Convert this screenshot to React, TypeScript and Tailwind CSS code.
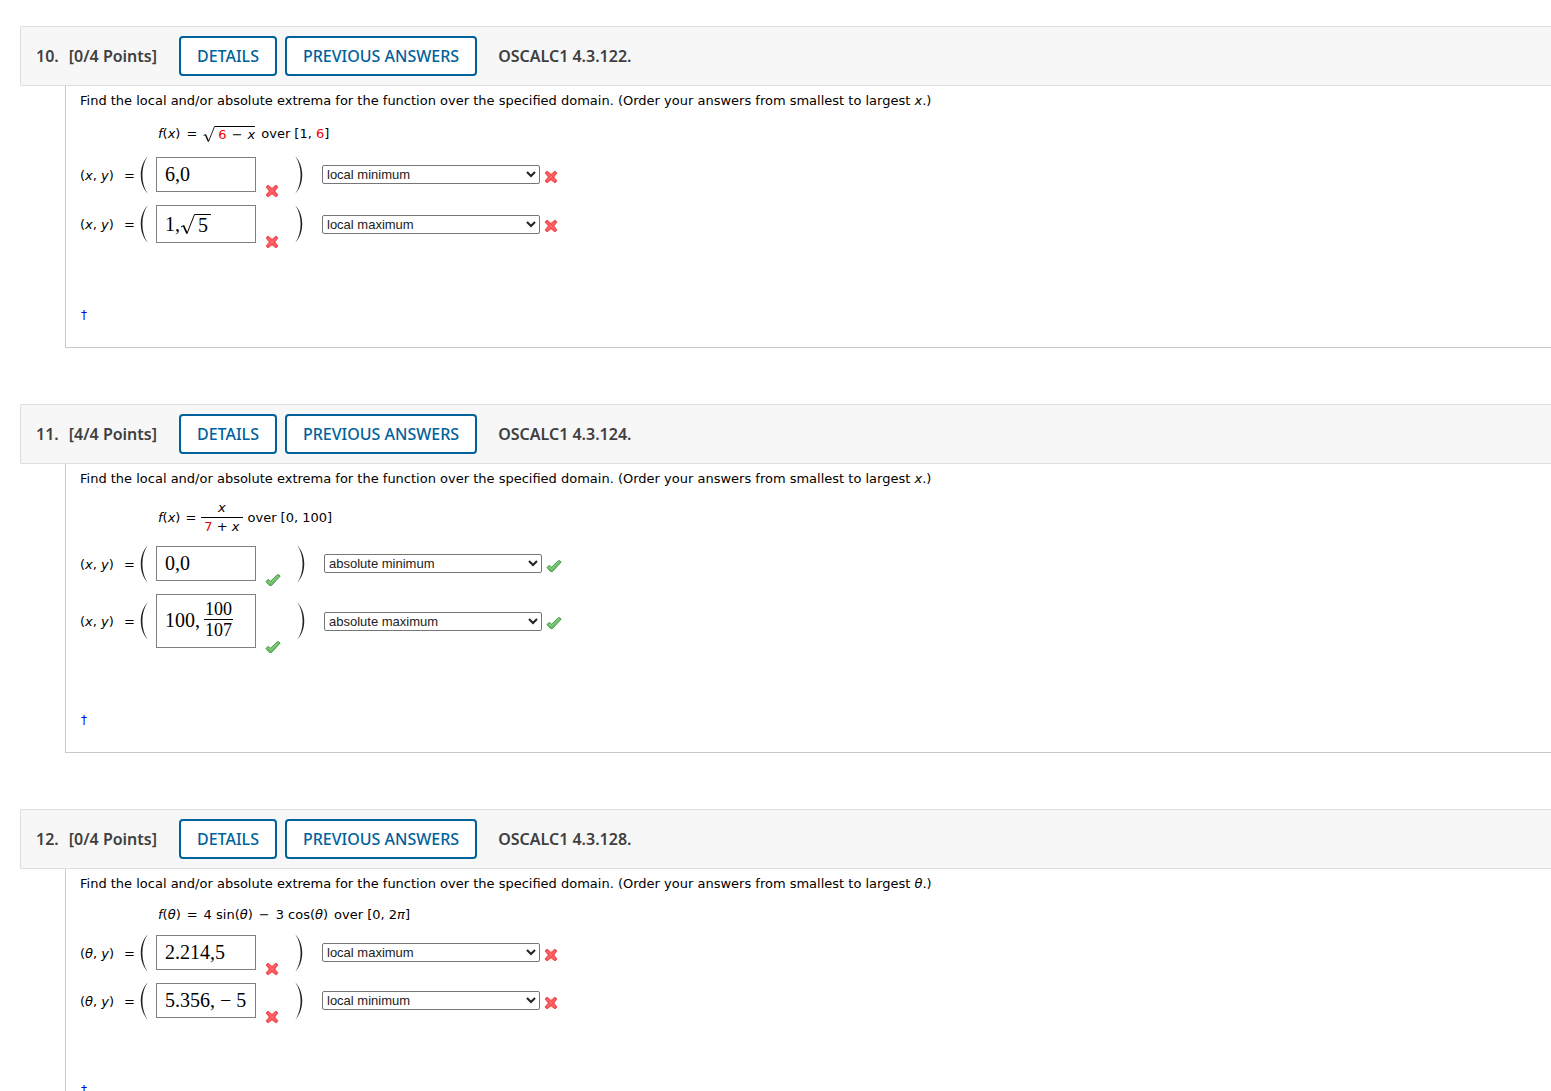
import React from 'react';

interface Answer {
  value: string;
  math?: React.ReactNode;
  kind: string;
}

interface Question {
  number: number;
  score: string;
  code: string;
  variable: string;
  correct: boolean;
  formula: React.ReactNode;
  answers: Answer[];
}

const KINDS = [
  'local minimum',
  'local maximum',
  'absolute minimum',
  'absolute maximum',
];

// Radical sign with a bar over its contents
const Root: React.FC<{ children: React.ReactNode }> = ({ children }) => (
  <span className="inline-flex items-end">
    <svg className="h-[17px] w-[12px]" viewBox="0 0 12 17" fill="none" stroke="#111">
      <path d="M0.5 9.5 L2.4 8.5" strokeWidth="0.9" />
      <path d="M2.4 8.5 L5.5 15.5" strokeWidth="1.5" />
      <path d="M5.5 15.5 L11.5 0.5 H12" strokeWidth="0.9" />
    </svg>
    <span className="flex h-[17px] gap-[5px] border-t border-black pl-[3px] leading-[15px]">{children}</span>
  </span>
);

const QUESTIONS: Question[] = [
  {
    number: 10,
    score: '0/4',
    code: 'OSCALC1 4.3.122.',
    variable: 'x',
    correct: false,
    formula: (
      <div className="flex h-6 items-center gap-1.5">
        <span><i>f</i>(<i>x</i>)</span>
        <span>=</span>
        <Root>
          <span className="text-[#ee0000]">6</span>
          <span>−</span>
          <i>x</i>
        </Root>
        <span>over [1, <span className="text-[#ee0000]">6</span>]</span>
      </div>
    ),
    answers: [
      { value: '6,0', kind: 'local minimum' },
      {
        value: '1,√5',
        math: (
          <div className="flex h-9 items-center">
            <span>1,</span>
            <svg className="h-[21px] w-[15px]" viewBox="0 0 15 21" fill="none" stroke="#000">
              <path d="M1 13 L3.5 11.5" strokeWidth="1" />
              <path d="M3.5 11.5 L7 19.5" strokeWidth="1.8" />
              <path d="M7 19.5 L14.5 0.5 H15" strokeWidth="1" />
            </svg>
            <span className="h-[21px] border-t border-black px-[3px] leading-[20px]">5</span>
          </div>
        ),
        kind: 'local maximum',
      },
    ],
  },
  {
    number: 11,
    score: '4/4',
    code: 'OSCALC1 4.3.124.',
    variable: 'x',
    correct: true,
    formula: (
      <div className="flex h-[35px] items-center gap-[5px]">
        <span><i>f</i>(<i>x</i>)</span>
        <span>=</span>
        <span className="flex flex-col items-center leading-[18px]">
          <i>x</i>
          <span className="border-t border-black px-[3px]">
            <span className="text-[#ee0000]">7</span> + <i>x</i>
          </span>
        </span>
        <span>over [0, 100]</span>
      </div>
    ),
    answers: [
      { value: '0,0', kind: 'absolute minimum' },
      {
        value: '100,100/107',
        math: (
          <div className="flex h-[52px] items-center gap-1 pb-[3px]">
            <span>100,</span>
            <span className="flex flex-col text-center text-[18px] leading-5">
              <span>100</span>
              <span className="border-t border-black px-px">107</span>
            </span>
          </div>
        ),
        kind: 'absolute maximum',
      },
    ],
  },
  {
    number: 12,
    score: '0/4',
    code: 'OSCALC1 4.3.128.',
    variable: 'θ',
    correct: false,
    formula: (
      <div className="flex h-[19px] gap-1.5 leading-5">
        <span><i>f</i>(<i>θ</i>)</span>
        <span>=</span>
        <span>4 sin(<i>θ</i>)</span>
        <span>−</span>
        <span>3 cos(<i>θ</i>)</span>
        <span>over [0, 2<i>π</i>]</span>
      </div>
    ),
    answers: [
      { value: '2.214,5', kind: 'local maximum' },
      { value: '5.356, − 5', kind: 'local minimum' },
    ],
  },
];

const Mark: React.FC<{ correct: boolean }> = ({ correct }) =>
  correct ? (
    <svg className="h-3.5 w-4" viewBox="0 0 16 14" role="img" aria-label="Correct">
      <path
        d="M1 8.6 L3 6.4 L5.6 8.2 L12.8 1.4 L15.2 3 L6.6 12.4 L4.4 12.4 Z"
        fill="#6cc067"
        stroke="#4a9a4a"
        strokeLinejoin="round"
      />
      <path d="M3 7.8 L5.6 9.8 L12.9 3" fill="none" stroke="#8fd488" />
    </svg>
  ) : (
    <svg className="size-3.5" viewBox="0 0 14 14" role="img" aria-label="Incorrect">
      <path
        d="M3 1 L7 4.4 L11 1 L13 3 L9.8 7 L13 11 L11 13 L7 9.8 L3 13 L1 11 L4.4 7 L1 3 Z"
        fill="#fb4d50"
        stroke="#f0565a"
        strokeLinejoin="round"
      />
      <path d="M3 3 L11 11 M11 3 L3 11" stroke="#ff7074" />
    </svg>
  );

const Paren: React.FC<{ side: 'left' | 'right' }> = ({ side }) => (
  <svg className="-my-0.5 h-[38px] w-2 shrink-0" viewBox="0 0 8 38" fill="#222">
    {side === 'left' ? (
      <path d="M7.8 0.3 C-1.6 10 -1.6 28 7.8 37.7 C0.6 28 0.6 10 7.8 0.3 Z" />
    ) : (
      <path d="M0.2 0.3 C9.6 10 9.6 28 0.2 37.7 C7.4 28 7.4 10 0.2 0.3 Z" />
    )}
  </svg>
);

const AnswerRow: React.FC<{ answer: Answer; variable: string; correct: boolean }> = ({
  answer,
  variable,
  correct,
}) => (
  <div className="flex items-center">
    <span className="flex w-[60px] justify-between pr-[5px] pt-0.5">
      <span>(<i>{variable}</i>, <i>y</i>)</span>
      <span>=</span>
    </span>
    <Paren side="left" />
    {answer.math ? (
      <div
        role="textbox"
        tabIndex={0}
        aria-label={`(${variable}, y): ${answer.value}`}
        className="ml-2 w-[100px] border border-[#808080] pl-2 font-['Liberation_Serif',serif] text-[20px]"
      >
        {answer.math}
      </div>
    ) : (
      <input
        type="text"
        aria-label={`(${variable}, y)`}
        defaultValue={answer.value}
        className="ml-2 h-[35px] w-[100px] border border-[#808080] pl-2 font-['Liberation_Serif',serif] text-[20px]"
      />
    )}
    <span className="-mb-1.5 ml-[9px] mr-4 self-end">
      <Mark correct={correct} />
    </span>
    <Paren side="right" />
    <select
      aria-label={`Type of extremum at (${variable}, y)`}
      defaultValue={answer.kind}
      className="ml-[19px] h-[19px] w-[218px] rounded-xs border border-[#767676] bg-white font-['Liberation_Sans',sans-serif] text-[13px] text-[#222]"
    >
      {KINDS.map(k => <option key={k} value={k}>{k}</option>)}
    </select>
    <span className="ml-1 mt-1">
      <Mark correct={correct} />
    </span>
  </div>
);

const QuestionCard: React.FC<{ question: Question }> = ({ question: q }) => (
  <section>
    <header className="flex h-[60px] items-center rounded-l-xs border border-r-0 border-[#dedede] bg-[#f7f7f7] pl-[15px] font-['Noto_Sans',sans-serif] text-[16px] font-semibold text-[#404040]">
      <h2 className="flex gap-2.5">
        <span>{q.number}.</span>
        <span>[{q.score} Points]</span>
      </h2>
      <div className="ml-[22px] mr-[21px] flex gap-2 font-medium text-[#00629b]">
        <button className="h-10 rounded border-2 border-[#00629b] bg-white px-4">DETAILS</button>
        <button className="h-10 rounded border-2 border-[#00629b] bg-white px-4">PREVIOUS ANSWERS</button>
      </div>
      <span>{q.code}</span>
    </header>

    <div className="ml-[45px] border-b border-l border-[#c8c8c8] pb-[22px] pl-3.5 pt-[5px]">
      <p className="leading-5">
        Find the local and/or absolute extrema for the function over the specified domain. (Order your answers from smallest to largest <i>{q.variable}</i>.)
      </p>
      <div className="my-[11px] ml-[78px]">{q.formula}</div>
      <div className="flex flex-col gap-[13px]">
        {q.answers.map(a => (
          <AnswerRow key={a.kind} answer={a} variable={q.variable} correct={q.correct} />
        ))}
      </div>
      <div className="mt-[62px] h-5 pl-px text-[12px] leading-5">
        <a href="#footnote" className="text-[#0000ee]">†</a>
      </div>
    </div>
  </section>
);

export default function App() {
  return (
    <main className="flex flex-col gap-14 overflow-hidden bg-white pl-5 pt-[26px] font-['DejaVu_Sans',sans-serif] text-[13px] text-black">
      {QUESTIONS.map(q => <QuestionCard key={q.number} question={q} />)}
    </main>
  );
}
